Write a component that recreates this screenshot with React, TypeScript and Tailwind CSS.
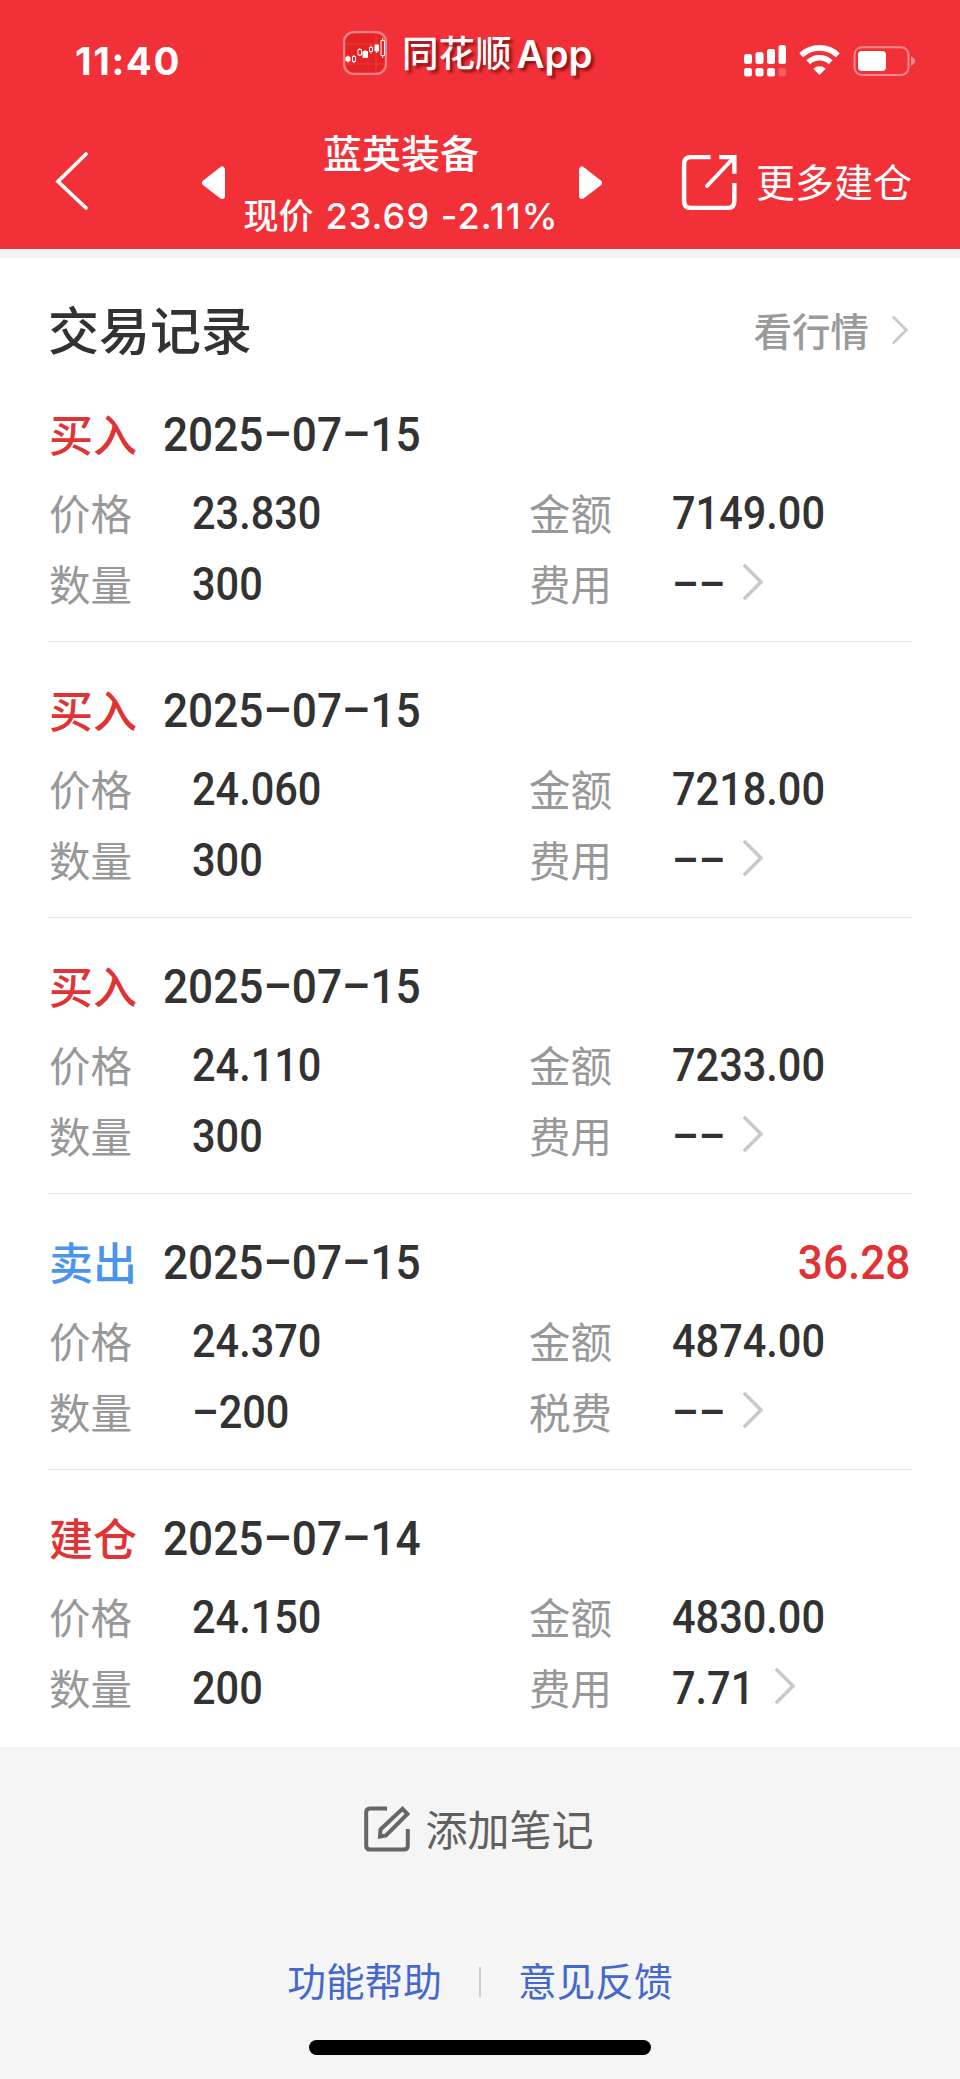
import React from "react";

type Trade = {
  kind: string;
  color: string;
  date: string;
  profit?: string;
  price: string;
  amount: string;
  qty: string;
  feeLabel: string;
  fee: string;
};

const trades: Trade[] = [
  { kind: "买入", color: "text-[#e03335]", date: "2025-07-15", price: "23.830", amount: "7149.00", qty: "300", feeLabel: "费用", fee: "--" },
  { kind: "买入", color: "text-[#e03335]", date: "2025-07-15", price: "24.060", amount: "7218.00", qty: "300", feeLabel: "费用", fee: "--" },
  { kind: "买入", color: "text-[#e03335]", date: "2025-07-15", price: "24.110", amount: "7233.00", qty: "300", feeLabel: "费用", fee: "--" },
  { kind: "卖出", color: "text-[#4b94ed]", date: "2025-07-15", profit: "36.28", price: "24.370", amount: "4874.00", qty: "-200", feeLabel: "税费", fee: "--" },
  { kind: "建仓", color: "text-[#e03335]", date: "2025-07-14", price: "24.150", amount: "4830.00", qty: "200", feeLabel: "费用", fee: "7.71" },
];

/* Figures are set condensed, with a hyphen as wide as a digit. */
function Figure({ text, className }: { text: string; className: string }) {
  return (
    <span className={`inline-block whitespace-nowrap font-[Roboto,sans-serif] font-medium ${className}`}>
      {text.replace(/-/g, "–")}
    </span>
  );
}

function Chevron({ className }: { className: string }) {
  return (
    <svg viewBox="0 0 20 36" className={className} fill="none" stroke="#cacaca" strokeWidth="3.7" strokeLinecap="round">
      <path d="M2 2 18 18 2 34" />
    </svg>
  );
}

function StatusBar() {
  return (
    <div className="flex h-[124px] items-start text-white">
      <div className="ml-[75px] mt-[38px] w-[268px] font-[Inter,sans-serif] text-[38.500px] font-bold leading-[46px] tracking-[1.600px]">11:40</div>
      <svg viewBox="0 0 44 44" className="mt-[31px] size-[44px]">
        <rect x="0" y="0" width="44" height="44" rx="11" fill="#e62324" />
        <path d="M1 13H43M1 33H43M33 1V43" stroke="#ee4a4a" strokeWidth=".7" />
        <rect x="1" y="1" width="42" height="42" rx="10" fill="none" stroke="#f98085" strokeWidth="2.4" />
        <path d="M3 26h4v4H3zM5 24.500v7M20 20.500h4.500v6H20zM22.300 19v8M32 14h3.500v6H32zM33.700 14v8" fill="#fff" stroke="#fff" />
        <path d="M11 24v8M16.700 17v8M28 14.500v8M39.700 7v20" stroke="#fff" />
        <path d="M9.500 25.500h3v5h-3zM15 18.500h3.500v5.500H15zM26.500 16.500h3v4h-3zM38 9.500h3.500v15H38z" fill="#e62324" stroke="#fff" />
      </svg>
      <div className="ml-[15px] mt-[30px] flex whitespace-nowrap font-[Inter,'Noto_Sans_CJK_SC',sans-serif] text-[36.500px] font-semibold leading-[48px] [text-shadow:3px_3px_3px_rgba(90,0,0,0.65)]">
        <span className="font-medium">同花顺</span>
        <span className="ml-[5px] text-[38.500px]">App</span>
      </div>
      <svg viewBox="0 0 172 34" className="ml-auto mr-[44px] mt-[44px] h-[34px] w-[172px]" fill="#fff">
        <rect x="0" y="10" width="8" height="10" rx="2.500" />
        <rect x="11.500" y="8" width="8" height="12" rx="2.500" />
        <rect x="23" y="5" width="8" height="15" rx="2.500" />
        <rect x="34.500" y="1" width="7.500" height="19" rx="2.500" />
        <rect x="0" y="24" width="8" height="8.500" rx="2.500" />
        <rect x="11.500" y="24" width="8" height="8.500" rx="2.500" />
        <rect x="23" y="24" width="8" height="8.500" rx="2.500" />
        <rect x="34.500" y="24" width="7.500" height="8.500" rx="2.500" opacity=".22" />
        <g fill="none" stroke="#fff" strokeWidth="5.600">
          <path d="M57.200 11.200a26.500 26.500 0 0 1 36.600 0" />
          <path d="M64.300 18.200a16.500 16.500 0 0 1 22.400 0" />
        </g>
        <path d="M69.300 24.800a9 9 0 0 1 12.400 0L75.500 31z" />
        <rect x="110.500" y="3.200" width="54" height="27.800" rx="7.500" fill="none" stroke="#f98a8e" strokeWidth="2" />
        <rect x="114" y="7" width="28" height="20" rx="4" />
        <path d="M167 12.500q4 1.500 4 4.500t-4 4.500z" fill="#f98a8e" />
      </svg>
    </div>
  );
}

function NavBar() {
  return (
    <div className="flex h-[125px] items-start text-white">
      <svg viewBox="0 0 34 60" className="ml-[55px] mt-[27px] h-[60px] w-[34px]" fill="none" stroke="#fff" strokeWidth="3.700" strokeLinecap="round">
        <path d="M31 3 3 30.500 31 57" />
      </svg>
      <svg viewBox="0 0 26 36" className="ml-[111px] mt-[41px] h-[36px] w-[26px]" fill="#fff" stroke="#fff" strokeWidth="6" strokeLinejoin="round">
        <path d="M22 4.500V31L5 17.800z" />
      </svg>
      <div className="ml-[18px] flex w-[314px] flex-col items-center whitespace-nowrap">
        <div className="-mt-px font-['Noto_Sans_CJK_SC',sans-serif] text-[39px] font-medium leading-[56px]">蓝英装备</div>
        <div className="mt-[13px] flex gap-[12px] font-[Inter,'Noto_Sans_CJK_SC',sans-serif] text-[35px] font-medium leading-[48px]">
          <span>现价</span>
          <span className="text-[36px] tracking-[1.100px]">23.69 -2.11%</span>
        </div>
      </div>
      <svg viewBox="0 0 26 36" className="ml-[20px] mt-[41px] h-[36px] w-[26px]" fill="#fff" stroke="#fff" strokeWidth="6" strokeLinejoin="round">
        <path d="M4 4.500V31L21 17.800z" />
      </svg>
      <svg viewBox="0 0 56 56" className="ml-[77px] mt-[30px] size-[58px]" fill="none" stroke="#fff" strokeWidth="4.300">
        <path d="M28.500 3H9.500Q3 3 3 9.500V45.500Q3 52 9.500 52H45Q51.500 52 51.500 45.500V28" />
        <path d="M37 3H51.500V19" />
        <path d="M51 3.500 25 31" strokeWidth="3.600" strokeLinecap="round" />
      </svg>
      <div className="ml-[17px] mt-[28px] whitespace-nowrap font-['Noto_Sans_CJK_SC',sans-serif] text-[39px] leading-[56px]">更多建仓</div>
    </div>
  );
}

function Cell({ label, value, arrow }: { label: string; value: string; arrow?: boolean }) {
  return (
    <div className="flex h-[71px] w-[480px] shrink-0 items-center">
      <div className="-mt-[3px] w-[144px] pl-px font-['Noto_Sans_CJK_SC',sans-serif] text-[41.500px] leading-[67px] text-[#989898]">{label}</div>
      <Figure text={value} className="origin-left scale-x-[0.902] text-[46px] leading-[71px]" />
      {arrow && <Chevron className="-mt-[5px] ml-[12px] h-[36px] w-[20px]" />}
    </div>
  );
}

function TradeRow({ trade, last }: { trade: Trade; last: boolean }) {
  return (
    <div className="h-[276px] pl-[48px]">
      <div className="mr-[48px] flex h-[90px] items-center pt-[4px]">
        <div className={`-mt-[5px] w-[115px] pl-px font-['Noto_Sans_CJK_SC',sans-serif] text-[44px] font-medium leading-[70px] ${trade.color}`}>{trade.kind}</div>
        <Figure text={trade.date} className="origin-left scale-x-[0.902] text-[49px] leading-[70px]" />
        {trade.profit && (
          <Figure text={trade.profit} className="ml-auto mr-[2px] origin-right scale-x-[0.92] text-[48px] leading-[70px] text-[#e03335]" />
        )}
      </div>
      <div className="flex">
        <Cell label="价格" value={trade.price} />
        <Cell label="金额" value={trade.amount} />
      </div>
      <div className="flex">
        <Cell label="数量" value={trade.qty} />
        <Cell label={trade.feeLabel} value={trade.fee} arrow />
      </div>
      <div className={`mr-[48px] mt-[21px] h-px ${last ? "bg-transparent" : "bg-[#e9e9e9]"}`} />
    </div>
  );
}

export default function App() {
  return (
    <div className="flex h-[2079px] w-[960px] flex-col overflow-hidden bg-white text-[#323232]">
      <header className="h-[249px] shrink-0 bg-[#f23038]">
        <StatusBar />
        <NavBar />
      </header>
      <div className="h-[9px] shrink-0 bg-[#f4f4f4]" />
      <main className="h-[1489px] shrink-0">
        <div className="flex h-[130px] items-center px-[48px] pt-[14px] font-['Noto_Sans_CJK_SC',sans-serif]">
          <h1 className="-mt-[5px] text-[51px] font-medium leading-[72px]">交易记录</h1>
          <div className="-mt-[3px] ml-auto text-[38.500px] font-medium leading-[56px] text-[#9a9a9a]">看行情</div>
          <Chevron className="ml-[23px] mr-[4px] h-[28px] w-[16px]" />
        </div>
        {trades.map((t, i) => (
          <TradeRow key={i} trade={t} last={i === trades.length - 1} />
        ))}
      </main>
      <footer className="flex grow flex-col items-center bg-[#f5f5f5] font-['Noto_Sans_CJK_SC',sans-serif]">
        <div className="mt-px h-px w-full bg-[#ebebeb]" />
        <div className="mt-[50px] flex h-[60px] items-center pr-[2px] text-[42px] leading-[58px] text-[#606060]">
          <svg viewBox="0 0 46 46" className="mr-[15px] size-[46px]" fill="none" stroke="#666" strokeWidth="4">
            <path d="M23 2.500H6Q2.200 2.500 2.200 6.300V39.700Q2.200 43.500 6 43.500H40Q43.800 43.500 43.800 39.700V23" />
            <path d="M16 30.500 16.500 23.500 38.500 2.800 43.500 8 22 29.500z" />
          </svg>
          <span className="-mt-[3px]">添加笔记</span>
        </div>
        <div className="mt-[95px] flex h-[56px] items-center text-[38.700px] leading-[56px] text-[#4468cc]">
          <span className="-mt-[6px]">功能帮助</span>
          <span className="mx-[37px] h-[30px] w-[2px] bg-[#ccc]" />
          <span className="-mt-[6px]">意见反馈</span>
        </div>
        <div className="mt-[30px] h-[15px] w-[342px] rounded-full bg-black" />
      </footer>
    </div>
  );
}
